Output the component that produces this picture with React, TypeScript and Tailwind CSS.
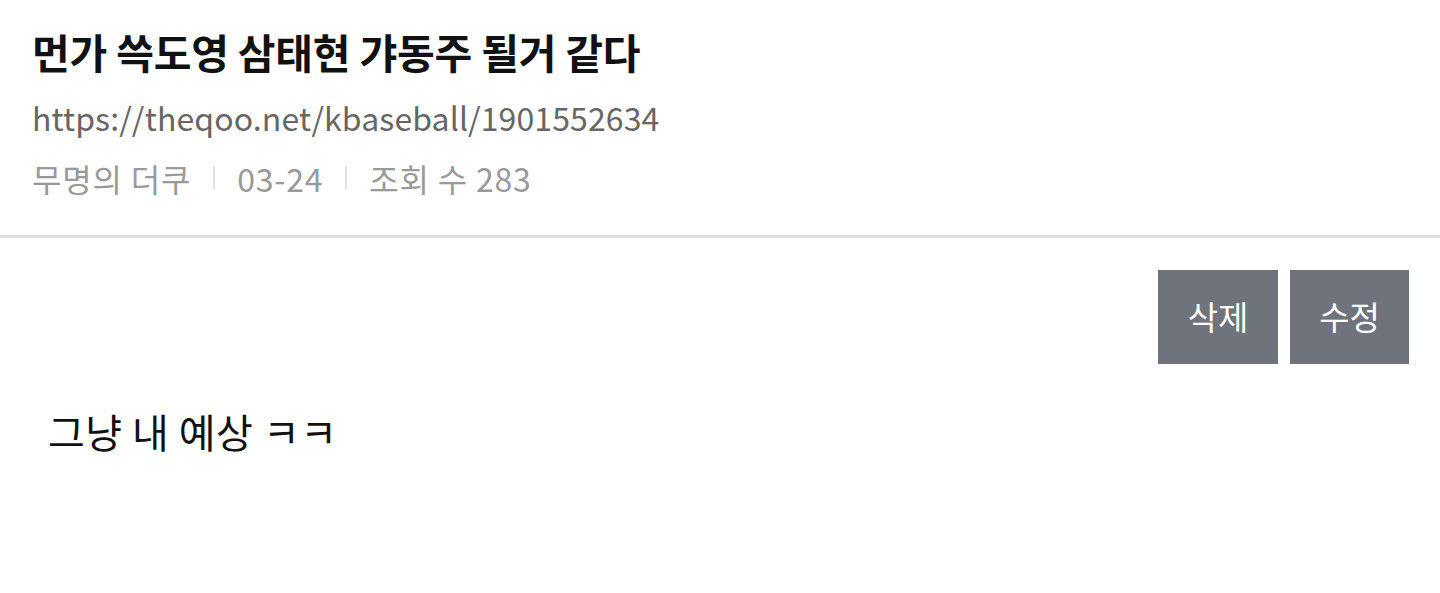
import React from "react";

const Divider = () => <span className="mx-[22px] inline-block h-[24px] w-[2px] bg-[#e2e2e2]" />;

export default function App() {
  return (
    <div className="min-h-[593px] bg-white font-['Noto_Sans_CJK_KR','Noto_Sans',sans-serif]">
      <header className="px-[32px] pt-[25px] pb-[36px]">
        <h1 className="text-[41px] leading-[52px] font-bold tracking-[-0.2px] text-[#111]">먼가 쓱도영 삼태현 갸동주 될거 같다</h1>
        <p className="mt-[19px] text-[32px] leading-[42px] tracking-[0.1px] text-[#666]">https://theqoo.net/kbaseball/1901552634</p>
        <div className="mt-[19px] flex items-center text-[32px] leading-[42px] tracking-[0.8px] text-[#999]">
          <span>무명의 더쿠</span>
          <Divider />
          <span>03-24</span>
          <Divider />
          <span>조회 수 283</span>
        </div>
      </header>
      <hr className="border-0 h-[3px] bg-[#dedede]" />
      <div className="flex justify-end gap-[12px] pt-[32px] pr-[31px]">
        <button type="button" className="h-[94px] w-[120px] bg-[#6f747c] text-[33px] text-white">삭제</button>
        <button type="button" className="h-[94px] w-[119px] bg-[#6f747c] text-[33px] text-white">수정</button>
      </div>
      <div className="px-[48px] pt-[41px] text-[40px] leading-[52px] tracking-[0.5px] text-[#111]">그냥 내 예상 ㅋㅋ</div>
    </div>
  );
}
